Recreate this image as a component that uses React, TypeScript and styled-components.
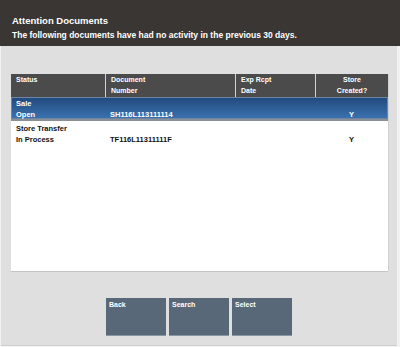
import React from 'react'
import styled, { createGlobalStyle } from 'styled-components'

const GlobalStyle = createGlobalStyle`
    html, body {
        margin: 0;
        padding: 0;
        background: #ececec;
        font-family: "Liberation Sans", Arial, sans-serif;
    }
`

const Screen = styled.div`
    width: 400px;
    height: 347px;
    display: flex;
    flex-direction: column;
    background: #f2f2f2;
    overflow: hidden;
`

const Header = styled.header`
    height: 46px;
    background: #3a3633;
    color: #fff;
    padding: 15px 0 0 12px;
    box-sizing: border-box;
    font-weight: 700;

    .title {
        font-size: 9.5px;
        line-height: 12px;
        margin-bottom: 3px;
    }

    .subtitle {
        font-size: 8.5px;
        line-height: 11px;
    }
`

const Body = styled.main`
    flex: 1;
    margin: 0 3px 1px 1px;
    background: #dfdfdf;
    border-bottom: 1px solid #cfcfcf;
    padding: 28px 0 0 10px;
    display: flex;
    flex-direction: column;
`

const Table = styled.section`
    width: 377px;
    height: 197px;
    background: #fff;
    box-shadow: 0 1px 0 #c4c4c4, 1px 0 0 #d0d0d0;
    display: flex;
    flex-direction: column;
`

const cols = '94px 130px 80px 73px'

const HeadRow = styled.div`
    display: grid;
    grid-template-columns: ${cols};
    height: 23px;
    background: #4b4b4b;
    color: #fff;
    font-size: 7px;
    font-weight: 700;
    line-height: 10.5px;
`

const HeadCell = styled.div<{ $center?: boolean }>`
    padding: 1px 5px 0;
    text-align: ${(p) => (p.$center ? 'center' : 'left')};
    & + & {
        border-left: 1px solid #d2d2d2;
    }
`

const Row = styled.div<{ $selected?: boolean }>`
    display: grid;
    grid-template-columns: ${cols};
    height: 24px;
    padding-top: 2px;
    box-sizing: border-box;
    font-size: 7.5px;
    font-weight: 700;
    line-height: 10.5px;
    color: ${(p) => (p.$selected ? '#fff' : '#111')};
    background: ${(p) => (p.$selected ? 'linear-gradient(#21497c, #3b73b0)' : '#fff')};
    box-shadow: ${(p) => (p.$selected ? 'inset 0 0 0 1px #6d86a6' : 'none')};
    border-bottom: ${(p) => (p.$selected ? '2px solid #8a8f96' : 'none')};
`

const Cell = styled.div<{ $center?: boolean }>`
    padding: 0 5px;
    display: flex;
    flex-direction: column;
    justify-content: flex-end;
    text-align: ${(p) => (p.$center ? 'center' : 'left')};
`

const Buttons = styled.div`
    display: flex;
    gap: 3px;
    margin: 27px 0 0 95px;
`

const Button = styled.button`
    width: 60px;
    height: 38px;
    border: none;
    border-bottom: 1px solid #8a96a2;
    background: #586878;
    color: #fff;
    font-family: inherit;
    font-size: 7px;
    font-weight: 700;
    text-align: left;
    padding: 3px 3px;
    display: flex;
    align-items: flex-start;
`

const rows = [
    { status: ['Sale', 'Open'], doc: 'SH116L113111114', date: '', store: 'Y', selected: true },
    { status: ['Store Transfer', 'In Process'], doc: 'TF116L11311111F', date: '', store: 'Y', selected: false },
]

export default function App() {
    return (
        <Screen>
            <GlobalStyle />
            <Header>
                <div className="title">Attention Documents</div>
                <div className="subtitle">The following documents have had no activity in the previous 30 days.</div>
            </Header>
            <Body>
                <Table>
                    <HeadRow>
                        <HeadCell>Status</HeadCell>
                        <HeadCell>
                            Document
                            <br />
                            Number
                        </HeadCell>
                        <HeadCell>
                            Exp Rcpt
                            <br />
                            Date
                        </HeadCell>
                        <HeadCell $center>
                            Store
                            <br />
                            Created?
                        </HeadCell>
                    </HeadRow>
                    {rows.map((r) => (
                        <Row key={r.doc} $selected={r.selected}>
                            <Cell>
                                <span>{r.status[0]}</span>
                                <span>{r.status[1]}</span>
                            </Cell>
                            <Cell>{r.doc}</Cell>
                            <Cell>{r.date}</Cell>
                            <Cell $center>{r.store}</Cell>
                        </Row>
                    ))}
                </Table>
                <Buttons>
                    <Button>Back</Button>
                    <Button>Search</Button>
                    <Button>Select</Button>
                </Buttons>
            </Body>
        </Screen>
    )
}
